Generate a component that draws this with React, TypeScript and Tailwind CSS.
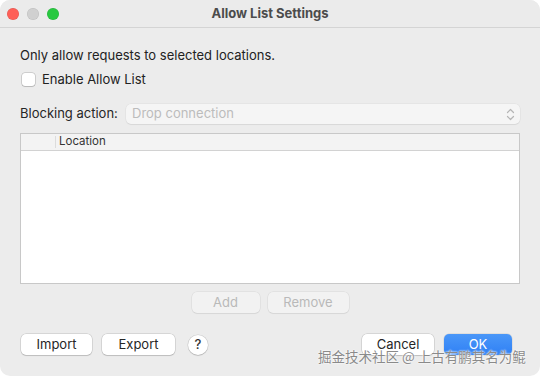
import React from "react";

const font = { fontFamily: '"Inter","Liberation Sans","Noto Sans CJK SC",sans-serif' };

function Btn({ children, className = "" }: { children: React.ReactNode; className?: string }) {
  return (
    <div
      className={
        "flex h-[21px] items-center justify-center rounded-[5px] bg-white text-[13px] text-[#262626] shadow-[0_0_0_0.5px_rgba(0,0,0,0.18),0_1px_1px_rgba(0,0,0,0.12)] " +
        className
      }
    >
      {children}
    </div>
  );
}

function DisabledBtn({ children, className = "" }: { children: React.ReactNode; className?: string }) {
  return (
    <div
      className={
        "flex h-[21px] items-center justify-center rounded-[5px] bg-[#f2f2f2] text-[13px] text-[#b9b9b9] shadow-[0_0_0_0.5px_rgba(0,0,0,0.08),0_1px_1px_rgba(0,0,0,0.05)] " +
        className
      }
    >
      {children}
    </div>
  );
}

export default function App() {
  return (
    <div className="h-[376px] w-[540px] bg-white" style={font}>
      <div className="relative flex h-[376px] w-[540px] flex-col overflow-hidden rounded-[10px] bg-[#ececec]">
        {/* Title bar */}
        <div className="relative flex h-[28px] items-center justify-center border-b border-[#d4d4d4] bg-[#ebebeb]">
          <div className="absolute left-[7px] top-[8px] flex gap-[8px]">
            <div className="h-[12px] w-[12px] rounded-full bg-[#fe5f57] shadow-[inset_0_0_0_0.5px_rgba(0,0,0,0.12)]" />
            <div className="h-[12px] w-[12px] rounded-full bg-[#d0d0d0] shadow-[inset_0_0_0_0.5px_rgba(0,0,0,0.1)]" />
            <div className="h-[12px] w-[12px] rounded-full bg-[#28c840] shadow-[inset_0_0_0_0.5px_rgba(0,0,0,0.12)]" />
          </div>
          <div className="text-[13px] font-bold text-[#4c4c4c]">Allow List Settings</div>
        </div>

        {/* Content */}
        <div className="flex flex-1 flex-col px-[20px]">
          <div className="mt-[19px] text-[13px] leading-[16px] text-[#222]">Only allow requests to selected locations.</div>
          <div className="mt-[8px] ml-[2px] flex items-center gap-[7px]">
            <div className="h-[13px] w-[13px] rounded-[3px] bg-white shadow-[0_0_0_0.5px_rgba(0,0,0,0.25),0_1px_1px_rgba(0,0,0,0.1)]" />
            <div className="text-[13px] leading-[16px] text-[#222]">Enable Allow List</div>
          </div>

          <div className="mt-[17px] flex items-center">
            <div className="w-[106px] text-[13px] text-[#262626]">Blocking action:</div>
            <div className="flex h-[20px] flex-1 items-center justify-between rounded-[5px] bg-[#f5f5f5] pl-[6px] pr-[5px] shadow-[0_0_0_0.5px_rgba(0,0,0,0.06),0_1px_1px_rgba(0,0,0,0.06)]">
              <span className="text-[13px] text-[#bcbcbc]">Drop connection</span>
              <svg width="9" height="13" viewBox="0 0 9 13" fill="none" stroke="#b5b5b5" strokeWidth="1.2" strokeLinecap="round" strokeLinejoin="round">
                <path d="M1.5 4.5 L4.5 1.5 L7.5 4.5" />
                <path d="M1.5 8.5 L4.5 11.5 L7.5 8.5" />
              </svg>
            </div>
          </div>

          {/* Table */}
          <div className="mt-[9px] flex h-[151px] flex-col border border-[#c8c8c8] bg-white">
            <div className="flex h-[17px] items-center border-b border-[#d2d2d2] bg-[#f3f3f3]">
              <div className="h-[12px] w-[35px] border-r border-[#dcdcdc]" />
              <div className="pl-[3px] text-[11.5px] text-[#333]">Location</div>
            </div>
            <div className="flex-1 bg-white" />
          </div>

          <div className="mt-[8px] flex justify-center gap-[8px]">
            <DisabledBtn className="w-[68px]">Add</DisabledBtn>
            <DisabledBtn className="w-[81px]">Remove</DisabledBtn>
          </div>

          <div className="mt-[21px] flex items-center">
            <Btn className="ml-[1px] w-[71px]">Import</Btn>
            <Btn className="ml-[10px] w-[73px]">Export</Btn>
            <div className="ml-[13px] flex h-[20px] w-[20px] items-center justify-center rounded-full bg-white text-[13px] font-medium text-[#333] shadow-[0_0_0_0.5px_rgba(0,0,0,0.15),0_1px_1px_rgba(0,0,0,0.12)]">
              ?
            </div>
            <div className="flex-1" />
            <Btn className="w-[72px]">Cancel</Btn>
            <div className="ml-[10px] mr-[8px] flex h-[21px] w-[68px] items-center justify-center rounded-[5px] bg-gradient-to-b from-[#4a97f8] to-[#2f80f5] text-[13px] text-white shadow-[0_0_0_0.5px_rgba(0,0,0,0.12)]">
              OK
            </div>
          </div>
        </div>

        {/* Watermark */}
        <div
          className="absolute left-[318px] top-[346px] whitespace-nowrap text-[13.5px] leading-[20px] text-[#8a8a8a] [text-shadow:0_0_2px_#fff,0_0_2px_#fff]"
          style={{ fontFamily: '"Noto Sans CJK SC","Liberation Sans",sans-serif' }}
        >
          掘金技术社区 @ 上古有鹏其名为鲲
        </div>
      </div>
    </div>
  );
}
